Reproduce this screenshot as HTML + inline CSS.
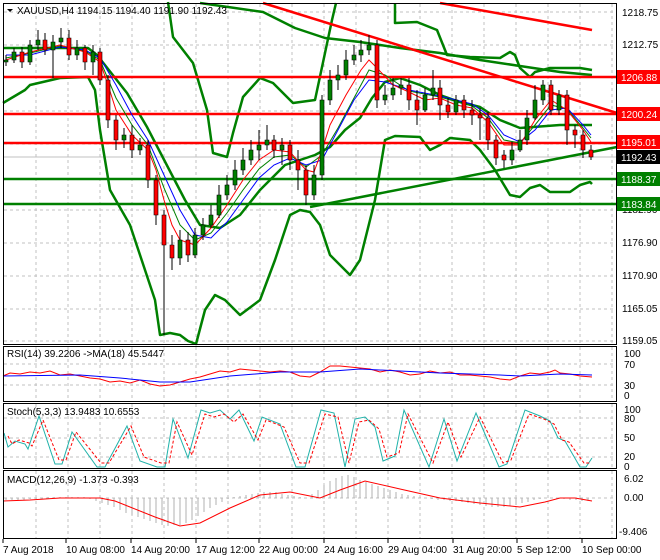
<!DOCTYPE html>
<html><head><meta charset="utf-8"><style>
html,body{margin:0;padding:0;background:#fff;width:660px;height:560px;overflow:hidden}
svg{display:block;font-family:"Liberation Sans",sans-serif;font-size:10px}
</style></head><body>
<svg width="660" height="560" viewBox="0 0 660 560" xmlns="http://www.w3.org/2000/svg">
<g stroke="#c0c0c0" stroke-dasharray="3,3" fill="none">
<path d="M36 4V344M68 4V344M100 4V344M132 4V344M164 4V344M196 4V344M228 4V344M260 4V344M292 4V344M324 4V344M356 4V344M388 4V344M420 4V344M452 4V344M484 4V344M516 4V344M548 4V344M580 4V344M612 4V344"/>
<path d="M36 347V401M68 347V401M100 347V401M132 347V401M164 347V401M196 347V401M228 347V401M260 347V401M292 347V401M324 347V401M356 347V401M388 347V401M420 347V401M452 347V401M484 347V401M516 347V401M548 347V401M580 347V401M612 347V401"/>
<path d="M36 404V468M68 404V468M100 404V468M132 404V468M164 404V468M196 404V468M228 404V468M260 404V468M292 404V468M324 404V468M356 404V468M388 404V468M420 404V468M452 404V468M484 404V468M516 404V468M548 404V468M580 404V468M612 404V468"/>
<path d="M36 471V538M68 471V538M100 471V538M132 471V538M164 471V538M196 471V538M228 471V538M260 471V538M292 471V538M324 471V538M356 471V538M388 471V538M420 471V538M452 471V538M484 471V538M516 471V538M548 471V538M580 471V538M612 471V538"/>
<path d="M4 12H616M4 45H616M4 111H616M4 144H616M4 210H616M4 243H616M4 276H616M4 309H616M4 341H616M4 364H616M4 385H616M4 418H616M4 438H616M4 457H616M4 498H616"/>
</g>
<line x1="3" y1="157" x2="617" y2="157" stroke="#c0c0c0"/>
<g fill="none" stroke="#008000" stroke-width="2.5" stroke-linejoin="round">
<path d="M3,103 L25,90 L30,85 L60,78 L88,77 L95,90 L100,130 L110,190 L130,225 L145,270 L155,300 L160,335 L170,333 L180,335 L188,341 L196,344 L205,310 L215,295 L225,300 L240,315 L260,300 L275,260 L290,215 L300,210 L310,212 L320,225 L330,255 L350,275 L360,260 L375,200 L385,140 L395,136 L420,137 L430,150 L440,145 L450,138 L470,140 L480,150 L495,170 L510,195 L520,197 L530,188 L540,185 L550,192 L570,192 L580,185 L590,182 L592,184"/>
<path d="M3,48 L88,48 L97,55 L127,93 L147,127 L173,177 L185,200 L200,225 L220,228 L240,215 L260,190 L285,165 L300,160 L315,155 L330,147 L345,130 L360,118 L372,98 L385,82 L400,78 L420,85 L440,95 L460,102 L480,107 L500,120 L520,128 L560,125 L592,125"/>
<path d="M168,2 L173,37 L193,63 L207,110 L213,153 L227,157 L233,133 L243,97 L260,78 L273,83 L293,103 L315,100 L325,53 L332,20 L336,3 M395,3 L395,23 L417,22 L437,30 L447,55 L470,57 L500,58 L510,52 L515,55 L520,68 L530,77 L535,72 L550,68 L580,68 L592,70"/>
<path d="M200,3 L263,12 L295,28 L325,38 L360,42 L400,48 L440,53 L480,60 L520,66 L560,72 L592,75"/>
</g>
<g stroke-width="2.5">
<line x1="3" y1="77" x2="617" y2="77" stroke="#f00"/>
<line x1="3" y1="114" x2="617" y2="114" stroke="#f00"/>
<line x1="3" y1="143" x2="617" y2="143" stroke="#f00"/>
<line x1="3" y1="179" x2="617" y2="179" stroke="#008000"/>
<line x1="3" y1="204" x2="617" y2="204" stroke="#008000"/>
<line x1="263" y1="3" x2="617" y2="113" stroke="#f00"/>
<line x1="440" y1="3" x2="592" y2="30" stroke="#f00"/>
<line x1="310" y1="207" x2="617" y2="147" stroke="#008000"/>
</g>
<g fill="none" stroke-width="1">
<polyline stroke="#008000" points="6,58 30,53 60,46 85,51 100,60 116,98 132,125 148,145 164,188 180,225 195,240 211,233 227,213 243,190 259,169 274,157 290,155 306,167 322,155 338,128 354,98 369,70 385,75 409,91 440,97 472,106 488,118 504,140 520,143 535,125 551,105 567,109 583,128 591,138"/>
<polyline stroke="#00f" points="6,55 30,55 60,47 85,50 100,58 116,85 132,115 148,140 164,175 180,210 195,235 211,238 227,222 243,200 259,178 274,165 290,158 306,165 322,160 338,130 354,100 369,80 385,82 409,90 440,96 472,104 488,115 504,135 520,142 535,130 551,110 567,108 583,125 591,135"/>
<polyline stroke="#f00" points="6,60 30,52 60,45 85,52 100,62 108,85 116,110 132,135 148,150 156,170 164,200 172,225 180,240 195,245 211,228 227,205 243,180 259,160 274,150 290,152 306,170 314,172 322,150 330,125 346,95 361,70 369,60 377,68 393,85 409,92 425,100 440,98 456,105 472,108 488,122 504,145 520,145 535,120 551,100 567,110 583,130 591,142"/>
</g>
<path stroke="#000" stroke-width="1" fill="none" d="M6 55V66M14 48V63M22 47V68M30 40V65M38 30V50M45 33V55M53 35V78M61 28V48M69 30V60M77 40V60M85 45V70M93 45V75M100 48V85M108 75V128M116 115V150M124 128V148M132 125V158M140 138V155M148 140V188M156 175V225M164 210V335M172 235V270M180 230V265M188 232V262M195 228V258M203 218V240M211 205V228M219 185V218M227 175V200M235 160V190M243 148V175M251 140V165M259 130V160M267 125V150M274 135V158M282 138V165M290 140V170M298 150V190M306 165V205M314 165V200M322 95V180M330 70V105M338 65V90M346 50V80M354 45V65M361 40V62M369 35V55M377 40V108M385 85V105M393 78V100M401 78V95M409 78V110M417 90V125M425 88V112M433 70V100M440 80V120M448 98V118M456 95V115M464 95V118M472 100V125M480 108V140M488 112V150M496 135V165M504 150V168M512 142V165M520 130V152M527 110V145M535 85V120M543 80V105M551 80V115M559 90V115M567 90V145M575 125V148M583 130V158M591 145V160"/>
<path fill="#008000" stroke="#000" stroke-width="0.6" d="M4 60h4v2h-4zM12 52h4v8h-4zM28 45h4v17h-4zM36 40h4v5h-4zM51 42h4v8h-4zM59 38h4v4h-4zM75 48h4v7h-4zM91 52h4v10h-4zM122 135h4v5h-4zM138 145h4v5h-4zM178 240h4v18h-4zM193 235h4v20h-4zM201 225h4v10h-4zM209 215h4v10h-4zM217 195h4v20h-4zM225 185h4v10h-4zM233 170h4v15h-4zM241 160h4v10h-4zM249 150h4v10h-4zM257 145h4v5h-4zM265 140h4v5h-4zM280 145h4v5h-4zM312 175h4v20h-4zM320 100h4v75h-4zM328 80h4v20h-4zM336 75h4v5h-4zM344 60h4v15h-4zM352 55h4v5h-4zM359 50h4v5h-4zM367 45h4v5h-4zM383 95h4v5h-4zM391 88h4v7h-4zM399 85h4v3h-4zM423 95h4v15h-4zM431 88h4v7h-4zM454 100h4v12h-4zM510 150h4v10h-4zM518 140h4v10h-4zM525 118h4v22h-4zM533 100h4v18h-4zM541 85h4v15h-4zM557 95h4v15h-4z"/>
<path fill="#f00" stroke="#000" stroke-width="0.6" d="M20 52h4v10h-4zM43 40h4v10h-4zM67 38h4v17h-4zM83 48h4v14h-4zM98 52h4v28h-4zM106 80h4v40h-4zM114 120h4v20h-4zM130 135h4v15h-4zM146 145h4v35h-4zM154 180h4v35h-4zM162 215h4v30h-4zM170 245h4v13h-4zM186 240h4v15h-4zM272 140h4v10h-4zM288 145h4v15h-4zM296 160h4v10h-4zM304 170h4v25h-4zM375 45h4v55h-4zM407 85h4v15h-4zM415 100h4v10h-4zM438 88h4v17h-4zM446 105h4v7h-4zM462 100h4v10h-4zM470 110h4v5h-4zM478 115h4v3h-4zM486 118h4v22h-4zM494 140h4v18h-4zM502 155h4v5h-4zM549 85h4v25h-4zM565 95h4v35h-4zM573 130h4v5h-4zM581 135h4v15h-4zM589 150h4v7h-4z"/>
<g fill="none" stroke-width="1">
<polyline stroke="#f00" points="3,376 10,373 20,374 30,372 40,373 50,371 60,375 70,374 80,376 90,378 100,379 110,382 120,381 130,383 140,380 150,384 160,386 170,385 180,382 190,379 200,377 210,374 220,371 230,372 240,369 250,370 260,371 270,372 280,371 290,372 300,376 310,377 320,372 330,366 340,366 350,367 360,368 370,369 380,372 390,370 400,372 410,375 420,374 430,371 440,373 450,372 460,375 470,375 480,376 490,377 500,379 510,380 520,376 530,373 540,374 550,372 555,370 560,373 570,374 580,376 592,377"/>
<polyline stroke="#00f" points="3,376 80,375 120,378 160,382 190,382 230,376 280,372 320,372 360,369 400,371 440,373 500,375 520,376 560,374 592,375"/>
<polyline stroke="#20b2aa" points="4,433 8,447 15,441 25,444 28,449 39,416 55,464 62,464 72,432 97,467 105,467 127,426 140,461 157,467 165,467 173,419 188,458 201,410 210,413 220,410 230,419 239,410 254,441 262,417 280,424 296,467 305,467 321,410 334,413 345,467 355,419 365,417 375,427 383,461 395,456 404,410 429,467 444,419 457,461 476,413 499,467 507,464 525,410 540,416 550,421 558,438 565,441 580,467 586,467 592,458"/>
<polyline stroke="#f00" stroke-dasharray="3,2" points="8,436 12,444 19,440 29,443 32,446 43,420 59,460 66,460 76,432 101,463 109,463 131,426 144,457 161,463 169,463 177,422 192,455 205,414 214,417 224,414 234,422 243,414 258,440 266,420 284,427 300,463 309,463 325,414 338,417 349,463 359,422 369,420 379,429 387,457 399,453 408,414 433,463 448,422 461,457 480,417 503,463 511,460 529,414 544,419 554,424 562,440 569,442 584,463 590,463"/>
<path stroke="#b0b0b0" d="M6 498V500M12 498V500M18 498V500M24 498V500M30 498V499M36 498V499M42 498V499M48 498V497M54 498V497M60 498V497M66 498V497M72 498V497M78 498V497M84 498V497M90 498V499M96 498V501M102 498V503M108 498V505M114 498V507M120 498V510M126 498V513M132 498V515M138 498V517M144 498V519M150 498V521M156 498V523M162 498V525M168 498V526M174 498V525M180 498V525M186 498V523M192 498V520M198 498V516M204 498V512M210 498V508M216 498V505M222 498V502M228 498V499M234 498V497M240 498V496M246 498V495M252 498V494M258 498V493M264 498V492M270 498V492M276 498V492M282 498V494M288 498V495M294 498V496M300 498V497M306 498V498M312 498V494M318 498V490M324 498V485M330 498V481M336 498V478M342 498V476M348 498V475M354 498V477M360 498V480M366 498V482M372 498V484M378 498V486M384 498V488M390 498V490M396 498V492M402 498V494M408 498V495M414 498V496M420 498V497M426 498V498M432 498V499M438 498V500M444 498V500M450 498V501M456 498V501M462 498V502M468 498V503M474 498V504M480 498V505M486 498V506M492 498V507M498 498V507M504 498V507M510 498V506M516 498V505M522 498V503M528 498V502M534 498V500M540 498V499M546 498V498M552 498V498M558 498V498M564 498V499M570 498V500M576 498V500M582 498V501M588 498V501"/>
<polyline stroke="#f00" points="3,501 30,500 60,498 100,498 115,501 130,507 155,517 180,526 200,523 230,508 260,495 290,492 320,498 340,490 365,481 400,489 440,498 480,503 520,507 545,502 560,498 575,498 592,501"/>
</g>
<g fill="none" stroke="#000" stroke-width="1">
<rect x="3.5" y="3.5" width="613" height="341"/>
<rect x="3.5" y="346.5" width="613" height="55"/>
<rect x="3.5" y="403.5" width="613" height="65"/>
<rect x="3.5" y="470.5" width="613" height="68"/>
<path d="M3 539v4M66 539v4M131 539v4M196 539v4M259 539v4M324 539v4M388 539v4M453 539v4M517 539v4M582 539v4"/>
</g>
<path d="M7 9h6l-3 3z" fill="#000"/>
<g fill="#000">
<text x="17" y="14">XAUUSD,H4  1194.15 1194.40 1191.90 1192.43</text>
<text x="7" y="357">RSI(14) 39.2206  -&gt;MA(18) 45.5447</text>
<text x="7" y="415">Stoch(5,3,3) 13.9483 10.6553</text>
<text x="7" y="483">MACD(12,26,9) -1.373 -0.393</text>
<text x="622" y="16">1218.75</text>
<text x="622" y="48">1212.75</text>
<text x="622" y="213">1182.90</text>
<text x="622" y="246">1176.90</text>
<text x="622" y="279">1170.90</text>
<text x="622" y="312">1165.05</text>
<text x="622" y="344">1159.05</text>
<text x="624" y="357">100</text><text x="624" y="368">70</text><text x="624" y="389">30</text><text x="624" y="399">0</text>
<text x="624" y="413">100</text><text x="624" y="422">80</text><text x="624" y="441">50</text><text x="624" y="460">20</text><text x="624" y="470">0</text>
<text x="624" y="482">6.02</text><text x="624" y="501">0.00</text><text x="619" y="535">-9.406</text>
<text x="3" y="553">7 Aug 2018</text>
<text x="66" y="553">10 Aug 08:00</text>
<text x="131" y="553">14 Aug 20:00</text>
<text x="196" y="553">17 Aug 12:00</text>
<text x="259" y="553">22 Aug 00:00</text>
<text x="324" y="553">24 Aug 16:00</text>
<text x="388" y="553">29 Aug 04:00</text>
<text x="453" y="553">31 Aug 20:00</text>
<text x="517" y="553">5 Sep 12:00</text>
<text x="582" y="553">10 Sep 00:00</text>
</g>
<rect x="617" y="70" width="43" height="14" fill="#f00"/><text x="621" y="81" fill="#fff">1206.88</text>
<rect x="617" y="107" width="43" height="14" fill="#f00"/><text x="621" y="118" fill="#fff">1200.24</text>
<rect x="617" y="135" width="43" height="14" fill="#f00"/><text x="621" y="146" fill="#fff">1195.01</text>
<rect x="617" y="150" width="43" height="14" fill="#000"/><text x="621" y="161" fill="#fff">1192.43</text>
<rect x="617" y="172" width="43" height="14" fill="#008000"/><text x="621" y="183" fill="#fff">1188.37</text>
<rect x="617" y="197" width="43" height="14" fill="#008000"/><text x="621" y="208" fill="#fff">1183.84</text>
</svg>
</body></html>
